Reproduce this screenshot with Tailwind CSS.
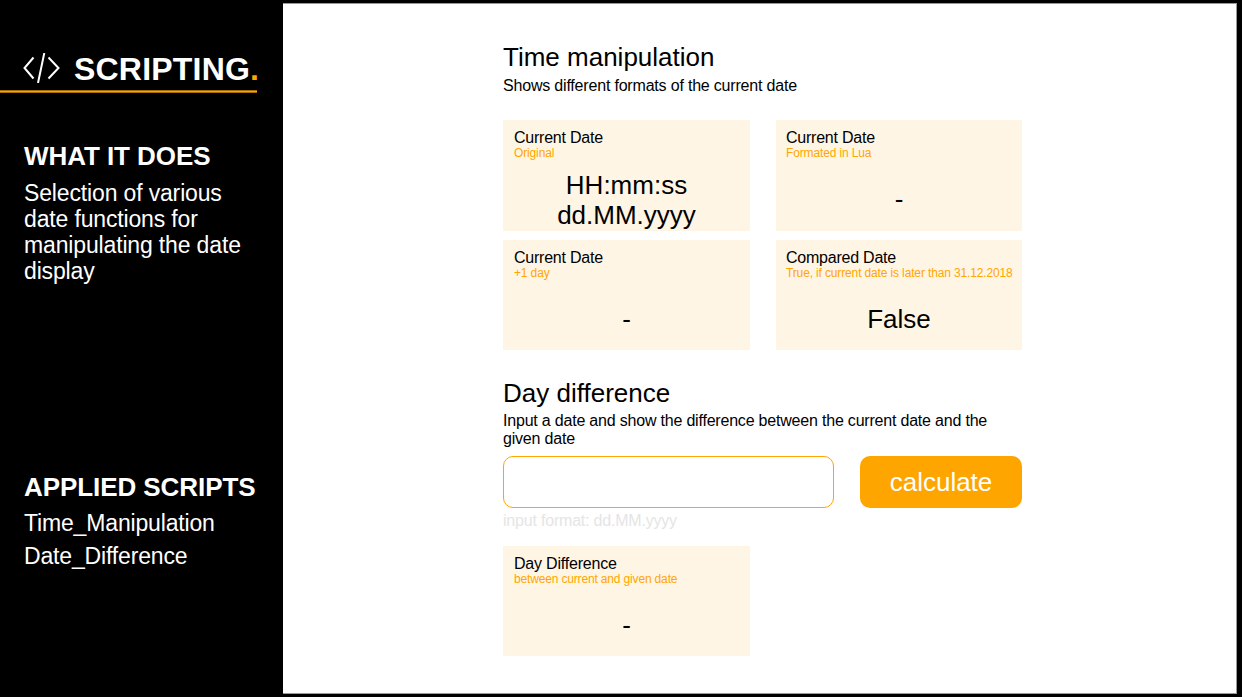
<!DOCTYPE html>
<html lang="en">
<head>
<meta charset="utf-8">
<title>Scripting</title>
<script src="https://cdn.jsdelivr.net/npm/@tailwindcss/browser@4"></script>
</head>
<body class="w-[1242px] h-[697px] overflow-hidden bg-black flex font-['Liberation_Sans',Arial,sans-serif] text-black">
<aside class="w-[283px] shrink-0 flex flex-col text-white">
  <div class="w-[257px] h-[90px] flex items-end whitespace-nowrap">
    <svg class="ml-[23px] mb-[7px] w-[37px] h-[30px] shrink-0" viewBox="0 0 37 30" fill="none" stroke="white" stroke-width="2"><path d="M10.500 4.500L1.500 15L10.500 25.500M25.500 4.500L35.500 15L25.500 25.500M21.300 0L15 30"/></svg>
    <h1 class="ml-[14px] mb-[2px] text-[32px] leading-[37px] font-bold tracking-[0.2px]">SCRIPTING<span class="text-[#ffa500]">.</span></h1>
  </div>
  <div class="w-[257px] h-[3px] bg-[#ffa500] border-y border-[#a86d00]"></div>
  <div class="pl-6 h-[331px] pt-[48px]">
    <h2 class="text-[26px] leading-[30px] font-bold whitespace-nowrap tracking-[-0.07px]">WHAT IT DOES</h2>
    <p class="mt-[9px] w-[230px] text-[23px] leading-[26px] tracking-[-0.15px]">Selection of various<br>date functions for<br>manipulating the date<br>display</p>
  </div>
  <div class="pl-6 pt-[48px]">
    <h2 class="text-[26px] leading-[30px] font-bold whitespace-nowrap tracking-[-0.07px]">APPLIED SCRIPTS</h2>
    <p class="mt-[5px] text-[23px] leading-[33px] tracking-[-0.16px]">Time_Manipulation<br>Date_Difference</p>
  </div>
</aside>
<main class="mt-[3px] w-[954px] h-[691px] bg-white border-y border-r border-[#999999] pl-[220px] pt-[38px]">
  <div class="w-[519px]">
    <h2 class="text-[26px] leading-[30px]">Time manipulation</h2>
    <p class="mt-[5px] text-[16px] leading-[18px] tracking-[-0.19px]">Shows different formats of the current date</p>
    <div class="mt-[25px] grid grid-cols-[247px_246px] gap-x-[26px] gap-y-[9px]">
      <section class="h-[111px] bg-[#fff5e5] pt-[9px]">
        <h3 class="pl-[11px] text-[16px] leading-[18px] tracking-[-0.23px]">Current Date</h3>
        <p class="pl-[11px] text-[12px] leading-[13px] text-[#ffa500] tracking-[-0.14px]">Original</p>
        <p class="mt-[10px] text-center text-[26px] leading-[30px]">HH:mm:ss<br>dd.MM.yyyy</p>
      </section>
      <section class="h-[111px] bg-[#fff5e5] pt-[9px]">
        <h3 class="pl-[10px] text-[16px] leading-[18px] tracking-[-0.23px]">Current Date</h3>
        <p class="pl-[10px] text-[12px] leading-[13px] text-[#ffa500] tracking-[-0.14px]">Formated in Lua</p>
        <p class="mt-[24px] text-center text-[26px] leading-[30px]">-</p>
      </section>
      <section class="h-[110px] bg-[#fff5e5] pt-[9px]">
        <h3 class="pl-[11px] text-[16px] leading-[18px] tracking-[-0.23px]">Current Date</h3>
        <p class="pl-[11px] text-[12px] leading-[13px] text-[#ffa500] tracking-[-0.14px]">+1 day</p>
        <p class="mt-[24px] text-center text-[26px] leading-[30px]">-</p>
      </section>
      <section class="h-[110px] bg-[#fff5e5] pt-[9px]">
        <h3 class="pl-[10px] text-[16px] leading-[18px] tracking-[-0.23px]">Compared Date</h3>
        <p class="pl-[10px] text-[12px] leading-[13px] text-[#ffa500] whitespace-nowrap tracking-[-0.14px]">True, if current date is later than 31.12.2018</p>
        <p class="mt-[24px] text-center text-[26px] leading-[30px]">False</p>
      </section>
    </div>
    <h2 class="mt-[28px] text-[26px] leading-[30px]">Day difference</h2>
    <p class="mt-[4px] text-[16px] leading-[18px] tracking-[-0.2px]">Input a date and show the difference between the current date and the<br>given date</p>
    <div class="mt-[8px] flex justify-between">
      <input type="text" aria-label="Date" class="w-[331px] h-[52px] rounded-[10px] border border-[#ffa500] bg-white">
      <button class="w-[162px] h-[52px] rounded-[10px] bg-[#ffa500] text-white text-[26px] leading-[30px]">calculate</button>
    </div>
    <p class="mt-[4px] text-[16px] leading-[18px] text-[#e5e5e5] tracking-[-0.2px]">input format: dd.MM.yyyy</p>
    <section class="mt-[16px] w-[247px] h-[110px] bg-[#fff5e5] pt-[9px]">
      <h3 class="pl-[11px] text-[16px] leading-[18px] tracking-[-0.2px]">Day Difference</h3>
      <p class="pl-[11px] text-[12px] leading-[13px] text-[#ffa500] tracking-[-0.16px]">between current and given date</p>
      <p class="mt-[24px] text-center text-[26px] leading-[30px]">-</p>
    </section>
  </div>
</main>
</body>
</html>
